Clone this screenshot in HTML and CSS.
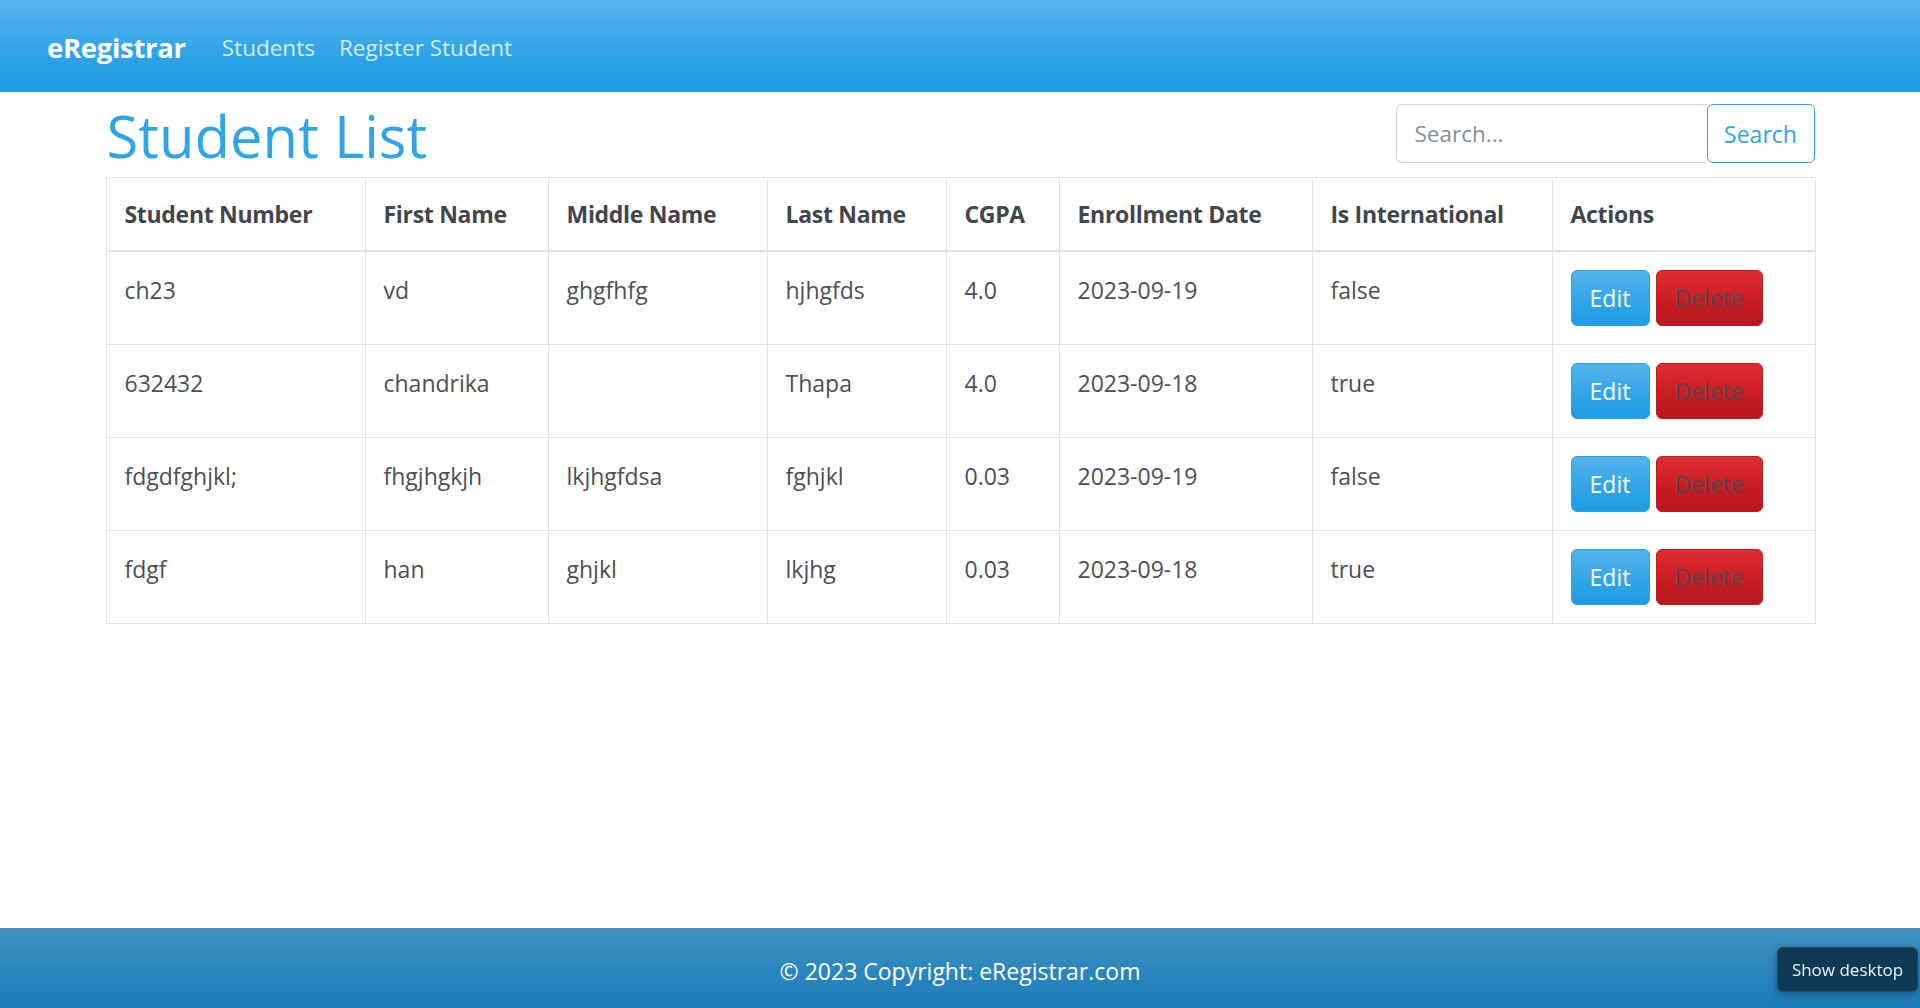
FILE: index.html
```html
<!DOCTYPE html>
<html lang="en">
<head>
<meta charset="utf-8">
<title>eRegistrar - Student List</title>
<link rel="stylesheet" href="styles.css">
</head>
<body>
<nav class="navbar">
  <a class="brand" href="#">eRegistrar</a>
  <a class="nav-link" href="#">Students</a>
  <a class="nav-link" href="#">Register Student</a>
</nav>
<main class="main">
  <div class="container">
    <div class="page-head">
      <h1 class="title">Student List</h1>
      <form class="search">
        <input class="search-input" type="text" placeholder="Search...">
        <button class="btn btn-outline" type="button">Search</button>
      </form>
    </div>
    <table class="table">
      <colgroup>
        <col class="c1"><col class="c2"><col class="c3"><col class="c4"><col class="c5"><col class="c6"><col class="c7"><col class="c8">
      </colgroup>
      <thead>
        <tr>
          <th>Student Number</th><th>First Name</th><th>Middle Name</th><th>Last Name</th><th>CGPA</th><th>Enrollment Date</th><th>Is International</th><th>Actions</th>
        </tr>
      </thead>
      <tbody>
        <tr>
          <td>ch23</td><td>vd</td><td>ghgfhfg</td><td>hjhgfds</td><td>4.0</td><td>2023-09-19</td><td>false</td>
          <td class="action-cell"><div class="actions"><button class="btn btn-primary">Edit</button><button class="btn btn-danger">Delete</button></div></td>
        </tr>
        <tr>
          <td>632432</td><td>chandrika</td><td></td><td>Thapa</td><td>4.0</td><td>2023-09-18</td><td>true</td>
          <td class="action-cell"><div class="actions"><button class="btn btn-primary">Edit</button><button class="btn btn-danger">Delete</button></div></td>
        </tr>
        <tr>
          <td>fdgdfghjkl;</td><td>fhgjhgkjh</td><td>lkjhgfdsa</td><td>fghjkl</td><td>0.03</td><td>2023-09-19</td><td>false</td>
          <td class="action-cell"><div class="actions"><button class="btn btn-primary">Edit</button><button class="btn btn-danger">Delete</button></div></td>
        </tr>
        <tr>
          <td>fdgf</td><td>han</td><td>ghjkl</td><td>lkjhg</td><td>0.03</td><td>2023-09-18</td><td>true</td>
          <td class="action-cell"><div class="actions"><button class="btn btn-primary">Edit</button><button class="btn btn-danger">Delete</button></div></td>
        </tr>
      </tbody>
    </table>
  </div>
</main>
<footer class="footer">© 2023 Copyright: eRegistrar.com</footer>
<div class="os-tooltip">Show desktop</div>
</body>
</html>
```
FILE: styles.css
```css
* { box-sizing: border-box; }
html, body { height: 100%; }
body {
  margin: 0;
  font-family: "Open Sans", "Noto Sans", sans-serif;
  font-size: 24px;
  line-height: 36px;
  color: #495057;
  display: flex;
  flex-direction: column;
  min-height: 100vh;
  background: #fff;
}
.navbar {
  height: 92px;
  display: flex;
  align-items: center;
  padding-left: 47px;
  padding-top: 3px;
  background: linear-gradient(#54b4eb, #2fa4e7 60%, #1d9ce5);
}
.brand {
  color: #fff;
  font-weight: 700;
  font-size: 27.5px;
  text-decoration: none;
  margin-right: 24px;
  letter-spacing: -0.3px;
}
.nav-link {
  color: rgba(255,255,255,0.8);
  text-decoration: none;
  padding: 0 12px;
  font-size: 22.5px;
}
.main { flex: 1; }
.container {
  width: 1709px;
  margin: 0 auto;
}
.page-head {
  margin-top: 8px;
  height: 72px;
  display: flex;
  align-items: center;
  justify-content: space-between;
}
.title {
  margin: 0;
  font-size: 58px;
  line-height: 72px;
  font-weight: 500;
  color: #2fa4e7;
  padding-left: 1px;
}
.search { display: flex; margin-top: -5px; }
.search-input {
  width: 311px;
  height: 59px;
  border: 1px solid #ced4da;
  border-right: none;
  border-radius: 6px 0 0 6px;
  padding: 0 18px;
  font: inherit;
  font-size: 22.5px;
  color: #495057;
  outline: none;
}
.search-input::placeholder { color: #868e96; }
.btn {
  font: inherit;
  font-size: 23px;
  line-height: 36px;
  height: 56px;
  padding: 0 17px;
  border: 1px solid transparent;
  border-radius: 6px;
  cursor: pointer;
}
.btn-outline {
  height: 59px;
  width: 108px;
  padding: 0;
  color: #2fa4e7;
  background: #fff;
  border-color: #2fa4e7;
}
.table {
  margin-top: 5px;
  width: 1709px;
  border-collapse: collapse;
  table-layout: fixed;
  border: 1px solid #dee2e6;
}
.c1 { width: 259px; } .c2 { width: 183px; } .c3 { width: 219px; } .c4 { width: 179px; }
.c5 { width: 113px; } .c6 { width: 253px; } .c7 { width: 240px; } .c8 { width: 263px; }
.table th, .table td {
  border: 1px solid #dee2e6;
  padding: 18px;
  text-align: left;
  vertical-align: top;
  font-size: 23px;
  white-space: nowrap;
}
.table td { padding-top: 20px; padding-bottom: 16px; }
.table td.action-cell { padding-top: 18px; padding-bottom: 18px; }
.table th {
  font-weight: 700;
  color: #41464d;
  border-bottom: 2px solid #dee2e6;
  letter-spacing: -0.3px;
}
.table td { height: 93px; }
.actions { display: flex; gap: 6px; }
.btn-primary {
  color: #fff;
  width: 79px;
  padding: 0;
  background: linear-gradient(#54b4eb, #2fa4e7 60%, #1d9ce5);
  border-color: #2ba2e6;
}
.btn-danger {
  color: #56474e;
  width: 107px;
  padding: 0;
  background: linear-gradient(#df2c32, #c71c22 60%, #b5191f);
  border-color: #c01b21;
}
.footer {
  height: 80px;
  display: flex;
  align-items: center;
  justify-content: center;
  color: #fff;
  font-size: 23px;
  background: linear-gradient(#4592be, #2e88bf 45%, #1b7cb8);
  padding-top: 6px;
}
.os-tooltip {
  position: fixed;
  left: 1777px;
  top: 947px;
  width: 141px;
  height: 45px;
  background: #0e3a56;
  border: 1px solid rgba(255,255,255,0.08);
  border-radius: 6px;
  box-shadow: 0 2px 8px rgba(0,0,0,0.35);
  color: #eef3f6;
  font-size: 17px;
  line-height: 43px;
  text-align: center;
}
```
